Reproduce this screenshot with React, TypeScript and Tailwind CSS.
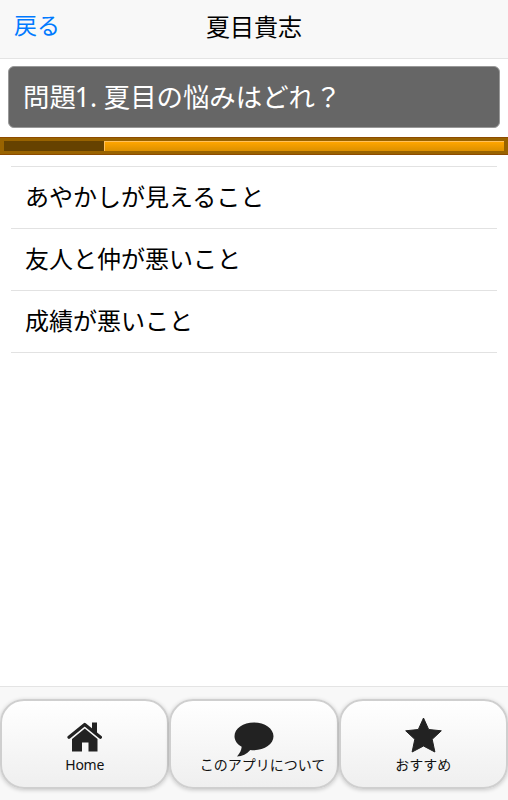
import type { ReactNode } from "react";

const answers = ["あやかしが見えること", "友人と仲が悪いこと", "成績が悪いこと"];

const HomeIcon = () => (
  <svg width="36" height="30" viewBox="0 0 36 30" fill="#222">
    <path d="M2 15.200 17.700 2.400l15.700 12.800" fill="none" stroke="#222" strokeWidth="3.200" strokeLinecap="round" strokeLinejoin="round" />
    <path d="M25 .6h5v11.400l-5-4z" />
    <path d="M5 17 17.800 6.600 30.500 17V29.500H21.500v-9h-6.500v9H5z" />
  </svg>
);

const BubbleIcon = () => (
  <svg width="40" height="35" viewBox="0 0 40 35" fill="#222">
    <path d="M20 .5C9.200.5.5 6.600.5 14.200c0 4.300 2.700 8 7.200 10.600-.3 3.300-1.800 6.500-4.700 9.700 5.300-.2 9.800-2.500 13.300-6.500 1.200.2 2.400.2 3.700.2 10.800 0 19.500-6.200 19.500-13.900S30.800.5 20 .5z" />
  </svg>
);

const StarIcon = () => (
  <svg width="37" height="36" viewBox="0 0 37 36" fill="#222" stroke="#222" strokeWidth="1" strokeLinejoin="round">
    <path d="M18.500 1 23.700 12.500 36.300 13.800 27.200 22.300 29.900 35 18.500 29 7.100 35 9.800 22.300.7 13.800 13.300 12.500z" />
  </svg>
);

const TabButton = ({ icon, iconTop, label, shift }: { icon: ReactNode; iconTop: string; label: string; shift?: string }) => (
  <button className="flex h-[90px] flex-1 flex-col items-center rounded-[24px] border-2 border-[#cfcfcf] bg-gradient-to-b from-white to-[#efefef] shadow-[0_1px_4px_rgba(0,0,0,0.2)]">
    <span className={`flex h-[54px] w-full shrink-0 justify-center ${iconTop}`}>{icon}</span>
    <span className={`text-[14px] leading-[20px] whitespace-nowrap text-[#111] ${shift ?? ""}`}>{label}</span>
  </button>
);

export default function App() {
  return (
    <div className="flex h-screen flex-col overflow-hidden bg-white font-['Noto_Sans','Noto_Sans_CJK_JP',sans-serif] text-black">
      <header className="grid h-[59px] shrink-0 grid-cols-3 border-b border-[#e4e4e4] bg-[#f8f8f8] text-[24px] leading-[36px]">
        <a className="pt-[7px] pl-[14px] text-[23px] text-[#007aff]">戻る</a>
        <h1 className="pt-[9px] text-center">夏目貴志</h1>
      </header>

      <h2 className="mx-2 mt-[7px] flex h-[62px] shrink-0 items-center rounded-md border border-[#999] bg-[#666] pt-0.5 pl-[14px] text-[26.400px] text-white">
        問題<span className="-ml-px">1.&nbsp;</span>夏目の悩みはどれ？
      </h2>

      {/* Time gauge */}
      <div className="mt-[9px] flex h-[18px] shrink-0 border-y border-[#8d4b00] bg-[#996300] px-1 py-[3px]">
        <div className="w-[100px] bg-[#664200]"></div>
        <div className="flex-1 border-t border-l border-[#ffc15c] bg-gradient-to-b from-[#ffa500] to-[#dc9000]"></div>
      </div>

      <ul className="mx-[11px] mt-[11px] border-t border-[#e2e2e2] text-[24px]">
        {answers.map((answer) => (
          <li key={answer} className="flex h-[62px] items-center border-b border-[#e2e2e2] pb-0.5 pl-[14px]">
            {answer}
          </li>
        ))}
      </ul>

      <footer className="mt-auto flex h-[114px] shrink-0 border-t border-[#e4e4e4] bg-[#f8f8f8] pt-[12px]">
        <TabButton icon={<HomeIcon />} iconTop="pt-[21px]" label="Home" shift="tracking-[-0.3px]" />
        <TabButton icon={<BubbleIcon />} iconTop="pt-[21px]" label="このアプリについて" shift="ml-[17px]" />
        <TabButton icon={<StarIcon />} iconTop="pt-[16px]" label="おすすめ" />
      </footer>
    </div>
  );
}
